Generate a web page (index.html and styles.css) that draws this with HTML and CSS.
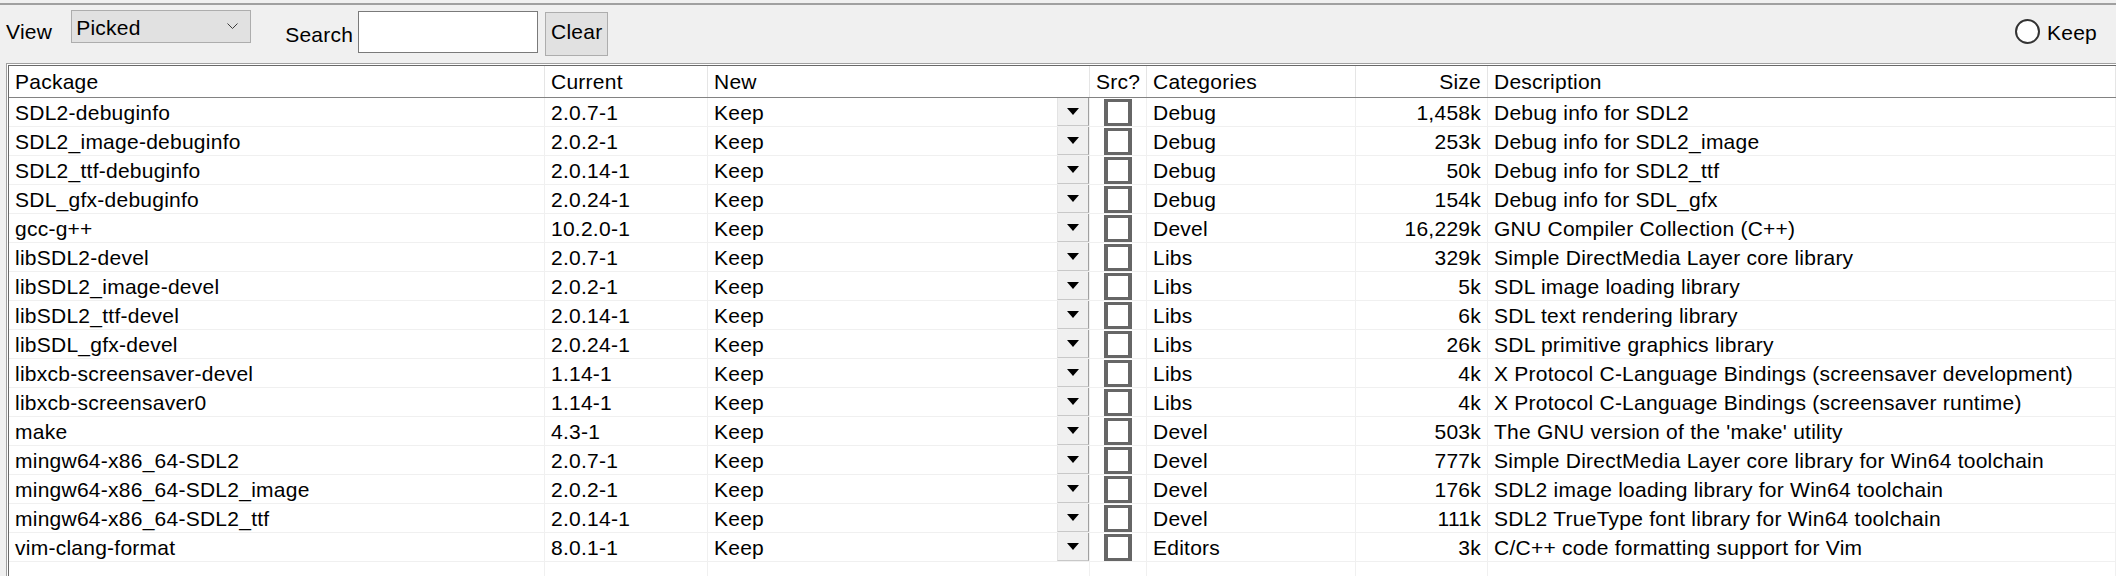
FILE: index.html
```html
<!DOCTYPE html>
<html lang="en">
<head>
    <meta charset="UTF-8">
    <meta name="viewport" content="width=device-width, initial-scale=1.0">
    <title>Select Packages</title>
    <link rel="stylesheet" href="styles.css">
</head>
<body>
<div class="window">
    <div class="topbar">
        <span class="label view-label">View</span>
        <div class="combo">
            <span>Picked</span>
            <svg class="chevron" width="11" height="7" viewBox="0 0 11 7"><polyline points="0.5,0.5 5.5,5.5 10.5,0.5" fill="none" stroke="#3c3c3c" stroke-width="1"/></svg>
        </div>
        <span class="label search-label">Search</span>
        <div class="search-box"></div>
        <div class="btn">Clear</div>
        <div class="spacer"></div>
        <label class="radio"><span class="radio-dot"></span><span class="label">Keep</span></label>
    </div>

    <div class="pkg-list">
        <div class="list-inner">
            <div class="list-head">
                <div class="cell">Package</div>
                <div class="cell">Current</div>
                <div class="cell">New</div>
                <div class="cell cell-center">Src?</div>
                <div class="cell">Categories</div>
                <div class="cell cell-size">Size</div>
                <div class="cell">Description</div>
            </div>

            <div class="list-row">
                <div class="cell">SDL2-debuginfo</div>
                <div class="cell">2.0.7-1</div>
                <div class="cell cell-new">Keep<span class="pick"></span></div>
                <div class="cell cell-src"><span class="check"></span></div>
                <div class="cell">Debug</div>
                <div class="cell cell-size">1,458k</div>
                <div class="cell">Debug info for SDL2</div>
            </div>
            <div class="list-row">
                <div class="cell">SDL2_image-debuginfo</div>
                <div class="cell">2.0.2-1</div>
                <div class="cell cell-new">Keep<span class="pick"></span></div>
                <div class="cell cell-src"><span class="check"></span></div>
                <div class="cell">Debug</div>
                <div class="cell cell-size">253k</div>
                <div class="cell">Debug info for SDL2_image</div>
            </div>
            <div class="list-row">
                <div class="cell">SDL2_ttf-debuginfo</div>
                <div class="cell">2.0.14-1</div>
                <div class="cell cell-new">Keep<span class="pick"></span></div>
                <div class="cell cell-src"><span class="check"></span></div>
                <div class="cell">Debug</div>
                <div class="cell cell-size">50k</div>
                <div class="cell">Debug info for SDL2_ttf</div>
            </div>
            <div class="list-row">
                <div class="cell">SDL_gfx-debuginfo</div>
                <div class="cell">2.0.24-1</div>
                <div class="cell cell-new">Keep<span class="pick"></span></div>
                <div class="cell cell-src"><span class="check"></span></div>
                <div class="cell">Debug</div>
                <div class="cell cell-size">154k</div>
                <div class="cell">Debug info for SDL_gfx</div>
            </div>
            <div class="list-row">
                <div class="cell">gcc-g++</div>
                <div class="cell">10.2.0-1</div>
                <div class="cell cell-new">Keep<span class="pick"></span></div>
                <div class="cell cell-src"><span class="check"></span></div>
                <div class="cell">Devel</div>
                <div class="cell cell-size">16,229k</div>
                <div class="cell">GNU Compiler Collection (C++)</div>
            </div>
            <div class="list-row">
                <div class="cell">libSDL2-devel</div>
                <div class="cell">2.0.7-1</div>
                <div class="cell cell-new">Keep<span class="pick"></span></div>
                <div class="cell cell-src"><span class="check"></span></div>
                <div class="cell">Libs</div>
                <div class="cell cell-size">329k</div>
                <div class="cell">Simple DirectMedia Layer core library</div>
            </div>
            <div class="list-row">
                <div class="cell">libSDL2_image-devel</div>
                <div class="cell">2.0.2-1</div>
                <div class="cell cell-new">Keep<span class="pick"></span></div>
                <div class="cell cell-src"><span class="check"></span></div>
                <div class="cell">Libs</div>
                <div class="cell cell-size">5k</div>
                <div class="cell">SDL image loading library</div>
            </div>
            <div class="list-row">
                <div class="cell">libSDL2_ttf-devel</div>
                <div class="cell">2.0.14-1</div>
                <div class="cell cell-new">Keep<span class="pick"></span></div>
                <div class="cell cell-src"><span class="check"></span></div>
                <div class="cell">Libs</div>
                <div class="cell cell-size">6k</div>
                <div class="cell">SDL text rendering library</div>
            </div>
            <div class="list-row">
                <div class="cell">libSDL_gfx-devel</div>
                <div class="cell">2.0.24-1</div>
                <div class="cell cell-new">Keep<span class="pick"></span></div>
                <div class="cell cell-src"><span class="check"></span></div>
                <div class="cell">Libs</div>
                <div class="cell cell-size">26k</div>
                <div class="cell">SDL primitive graphics library</div>
            </div>
            <div class="list-row">
                <div class="cell">libxcb-screensaver-devel</div>
                <div class="cell">1.14-1</div>
                <div class="cell cell-new">Keep<span class="pick"></span></div>
                <div class="cell cell-src"><span class="check"></span></div>
                <div class="cell">Libs</div>
                <div class="cell cell-size">4k</div>
                <div class="cell">X Protocol C-Language Bindings (screensaver development)</div>
            </div>
            <div class="list-row">
                <div class="cell">libxcb-screensaver0</div>
                <div class="cell">1.14-1</div>
                <div class="cell cell-new">Keep<span class="pick"></span></div>
                <div class="cell cell-src"><span class="check"></span></div>
                <div class="cell">Libs</div>
                <div class="cell cell-size">4k</div>
                <div class="cell">X Protocol C-Language Bindings (screensaver runtime)</div>
            </div>
            <div class="list-row">
                <div class="cell">make</div>
                <div class="cell">4.3-1</div>
                <div class="cell cell-new">Keep<span class="pick"></span></div>
                <div class="cell cell-src"><span class="check"></span></div>
                <div class="cell">Devel</div>
                <div class="cell cell-size">503k</div>
                <div class="cell">The GNU version of the 'make' utility</div>
            </div>
            <div class="list-row">
                <div class="cell">mingw64-x86_64-SDL2</div>
                <div class="cell">2.0.7-1</div>
                <div class="cell cell-new">Keep<span class="pick"></span></div>
                <div class="cell cell-src"><span class="check"></span></div>
                <div class="cell">Devel</div>
                <div class="cell cell-size">777k</div>
                <div class="cell">Simple DirectMedia Layer core library for Win64 toolchain</div>
            </div>
            <div class="list-row">
                <div class="cell">mingw64-x86_64-SDL2_image</div>
                <div class="cell">2.0.2-1</div>
                <div class="cell cell-new">Keep<span class="pick"></span></div>
                <div class="cell cell-src"><span class="check"></span></div>
                <div class="cell">Devel</div>
                <div class="cell cell-size">176k</div>
                <div class="cell">SDL2 image loading library for Win64 toolchain</div>
            </div>
            <div class="list-row">
                <div class="cell">mingw64-x86_64-SDL2_ttf</div>
                <div class="cell">2.0.14-1</div>
                <div class="cell cell-new">Keep<span class="pick"></span></div>
                <div class="cell cell-src"><span class="check"></span></div>
                <div class="cell">Devel</div>
                <div class="cell cell-size">111k</div>
                <div class="cell">SDL2 TrueType font library for Win64 toolchain</div>
            </div>
            <div class="list-row">
                <div class="cell">vim-clang-format</div>
                <div class="cell">8.0.1-1</div>
                <div class="cell cell-new">Keep<span class="pick"></span></div>
                <div class="cell cell-src"><span class="check"></span></div>
                <div class="cell">Editors</div>
                <div class="cell cell-size">3k</div>
                <div class="cell">C/C++ code formatting support for Vim</div>
            </div>

            <div class="list-row list-filler">
                <div class="cell"></div>
                <div class="cell"></div>
                <div class="cell"></div>
                <div class="cell"></div>
                <div class="cell"></div>
                <div class="cell"></div>
                <div class="cell"></div>
            </div>
        </div>
    </div>
</div>
</body>
</html>
```

FILE: styles.css
```css
html, body {
    margin: 0;
    height: 100%;
    overflow: hidden;
}
body {
    font-family: 'Liberation Sans', Arial, sans-serif;
    font-size: 21px;
    letter-spacing: 0.25px;
    color: #000;
    background-color: #f0f0f0;
}
.window {
    height: 576px;
    display: flex;
    flex-direction: column;
    padding-top: 3px;
    box-sizing: border-box;
}
.topbar {
    display: flex;
    align-items: flex-start;
    height: 58px;
    flex-shrink: 0;
    padding-left: 6px;
    padding-right: 19px;
    border-top: 2px solid #a0a0a0;
}
.label {
    line-height: 23px;
    white-space: nowrap;
}
.view-label {
    margin-top: 15px;
}
.combo {
    display: flex;
    justify-content: space-between;
    align-items: flex-start;
    margin-left: 19px;
    margin-top: 5px;
    width: 180px;
    height: 33px;
    padding: 5px 12px 0 4px;
    box-sizing: border-box;
    border: 1px solid #adadad;
    background-color: #e1e1e1;
    line-height: 23px;
}
.chevron {
    margin-top: 7px;
}
.search-label {
    margin-left: 34px;
    margin-top: 18px;
}
.search-box {
    margin-left: 5px;
    margin-top: 6px;
    width: 180px;
    height: 42px;
    box-sizing: border-box;
    border: 1px solid #7a7a7a;
    background-color: #fff;
}
.btn {
    margin-left: 7px;
    margin-top: 7px;
    width: 63px;
    height: 44px;
    box-sizing: border-box;
    padding-top: 7px;
    border: 1px solid #adadad;
    background-color: #e1e1e1;
    text-align: center;
    line-height: 23px;
}
.spacer {
    flex: 1;
}
.radio {
    display: flex;
    align-items: flex-start;
}
.radio-dot {
    margin-top: 14px;
    margin-right: 7px;
    width: 25px;
    height: 25px;
    box-sizing: border-box;
    border: 2px solid #333;
    border-radius: 50%;
    background-color: #fff;
}
.radio .label {
    margin-top: 16px;
}

/* package list */
.pkg-list {
    flex: 1;
    margin-left: 6px;
    padding: 1px 0 0 1px;
    border-top: 1px solid #a0a0a0;
    border-left: 1px solid #a0a0a0;
    background-color: #fff;
    min-height: 0;
}
.list-inner {
    height: 100%;
    display: flex;
    flex-direction: column;
    border-top: 1px solid #696969;
    border-left: 1px solid #696969;
    background-color: #fff;
}
.list-head, .list-row {
    display: grid;
    grid-template-columns: 536px 163px 382px 57px 209px 132px 1fr;
    box-sizing: border-box;
    flex-shrink: 0;
}
.list-head {
    height: 32px;
    border-bottom: 1px solid #828282;
}
.list-row {
    height: 29px;
    border-bottom: 1px solid #f0f0f0;
}
.cell {
    padding: 3px 6px 0;
    line-height: 23px;
    white-space: nowrap;
    overflow: hidden;
    border-right: 1px solid #f0f0f0;
}
.list-head .cell {
    padding-top: 4px;
    border-right-color: #e5e5e5;
}
.cell-center {
    text-align: center;
    padding-left: 0;
    padding-right: 0;
}
.cell-size {
    text-align: right;
}
.cell-new {
    display: flex;
    justify-content: space-between;
    align-items: flex-start;
    padding-right: 0;
}
.pick {
    display: flex;
    align-items: center;
    justify-content: center;
    margin-top: -3px;
    width: 32px;
    height: 28px;
    box-sizing: border-box;
    border-left: 1px solid #e3e3e3;
    border-right: 1px solid #a0a0a0;
    border-bottom: 1px solid #c8c8c8;
    background-color: #f0f0f0;
}
.pick::after {
    content: "";
    border-left: 6px solid transparent;
    border-right: 6px solid transparent;
    border-top: 7px solid #000;
}
.cell-src {
    display: flex;
    align-items: center;
    justify-content: center;
    padding: 0;
}
.check {
    width: 28px;
    height: 27px;
    box-sizing: border-box;
    border-style: solid;
    border-width: 3px 4px;
    border-color: #666;
    background-color: #fff;
}
.list-filler {
    flex: 1;
    border-bottom: none;
}
```
